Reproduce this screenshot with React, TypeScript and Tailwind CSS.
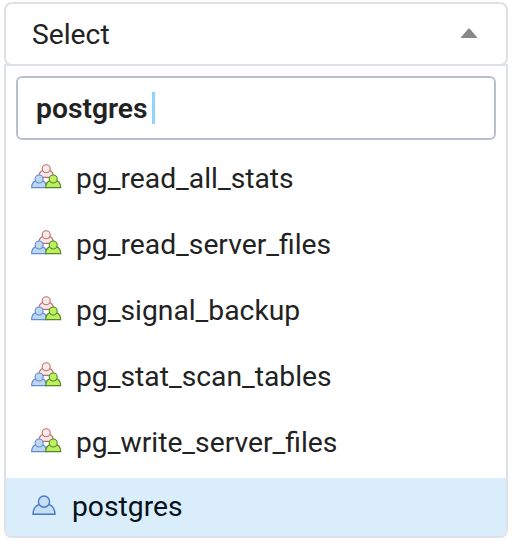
import React from "react";

const roles = [
  "pg_read_all_stats",
  "pg_read_server_files",
  "pg_signal_backup",
  "pg_stat_scan_tables",
  "pg_write_server_files",
];

function Person({ x, y, stroke, fill }: { x: number; y: number; stroke: string; fill: string }) {
  return (
    <g transform={`translate(${x} ${y})`} stroke={stroke} fill={fill} strokeWidth="1.1">
      <path d="M-7.5 8.6C-7.4 4.8-5.9 2.4-3 1.6H3C5.9 2.4 7.4 4.8 7.5 8.6Z" />
      <circle r="4" />
    </g>
  );
}

function GroupIcon() {
  return (
    <svg className="mb-[5px] h-7 w-8 shrink-0" viewBox="0 0 32 28">
      <Person x={16.2} y={5.8} stroke="#c0706c" fill="#f8eaea" />
      <Person x={9.1} y={16} stroke="#5f8bd3" fill="#bed6ee" />
      <Person x={23.2} y={16} stroke="#588529" fill="#baf15d" />
    </svg>
  );
}

function UserIcon() {
  return (
    <svg className="mb-[5px] h-7 w-7 shrink-0" viewBox="0 0 28 28" stroke="#4b77c8" fill="#c4dff0" strokeWidth="1.4">
      <path d="M3 23.3C3.2 17.6 5.4 14.4 9.8 13.4H18.2C22.6 14.4 24.8 17.6 25 23.3Z" />
      <circle cx="14" cy="10.6" r="5.6" />
    </svg>
  );
}

export default function App() {
  return (
    <div className="h-[542px] w-[512px] bg-white pt-[2px] pl-1 font-['Roboto',sans-serif] text-[28.25px] leading-8 text-[#222222]">
      <div className="flex h-16 w-[504px] items-center justify-between rounded-lg border-2 border-[#dee0e8] pr-7 pl-[26px]">
        <span className="pt-[2px]">Select</span>
        <svg className="mb-[2px] h-3 w-[18px]" viewBox="0 0 18 12">
          <path d="M1 10.3L8.2 1.8Q9 1 9.8 1.8L17 10.3Q17.5 11 16.5 11H1.5Q.5 11 1 10.3Z" fill="#888" />
        </svg>
      </div>
      <div className="-mt-[2px] h-[474px] w-[504px] overflow-hidden rounded-b-lg border-2 border-[#dee0e8]">
        <div className="mx-[10px] mt-[10px] flex h-16 items-center rounded-md border-2 border-[#babfcc] pl-[18px] font-semibold">
          <span className="pt-[2px]">postgres</span>
          <span className="ml-1 h-8 w-[3px] bg-[#91d5ff]" />
        </div>
        <ul className="mt-[6px]">
          {roles.map((role) => (
            <li key={role} className="flex h-[66px] items-center pl-6">
              <GroupIcon />
              <span className="ml-[14px]">{role}</span>
            </li>
          ))}
          <li className="mt-[2px] flex h-[58px] items-center bg-[#daedfb] pl-6 text-[#07111a]">
            <UserIcon />
            <span className="ml-[14px]">postgres</span>
          </li>
        </ul>
      </div>
    </div>
  );
}
